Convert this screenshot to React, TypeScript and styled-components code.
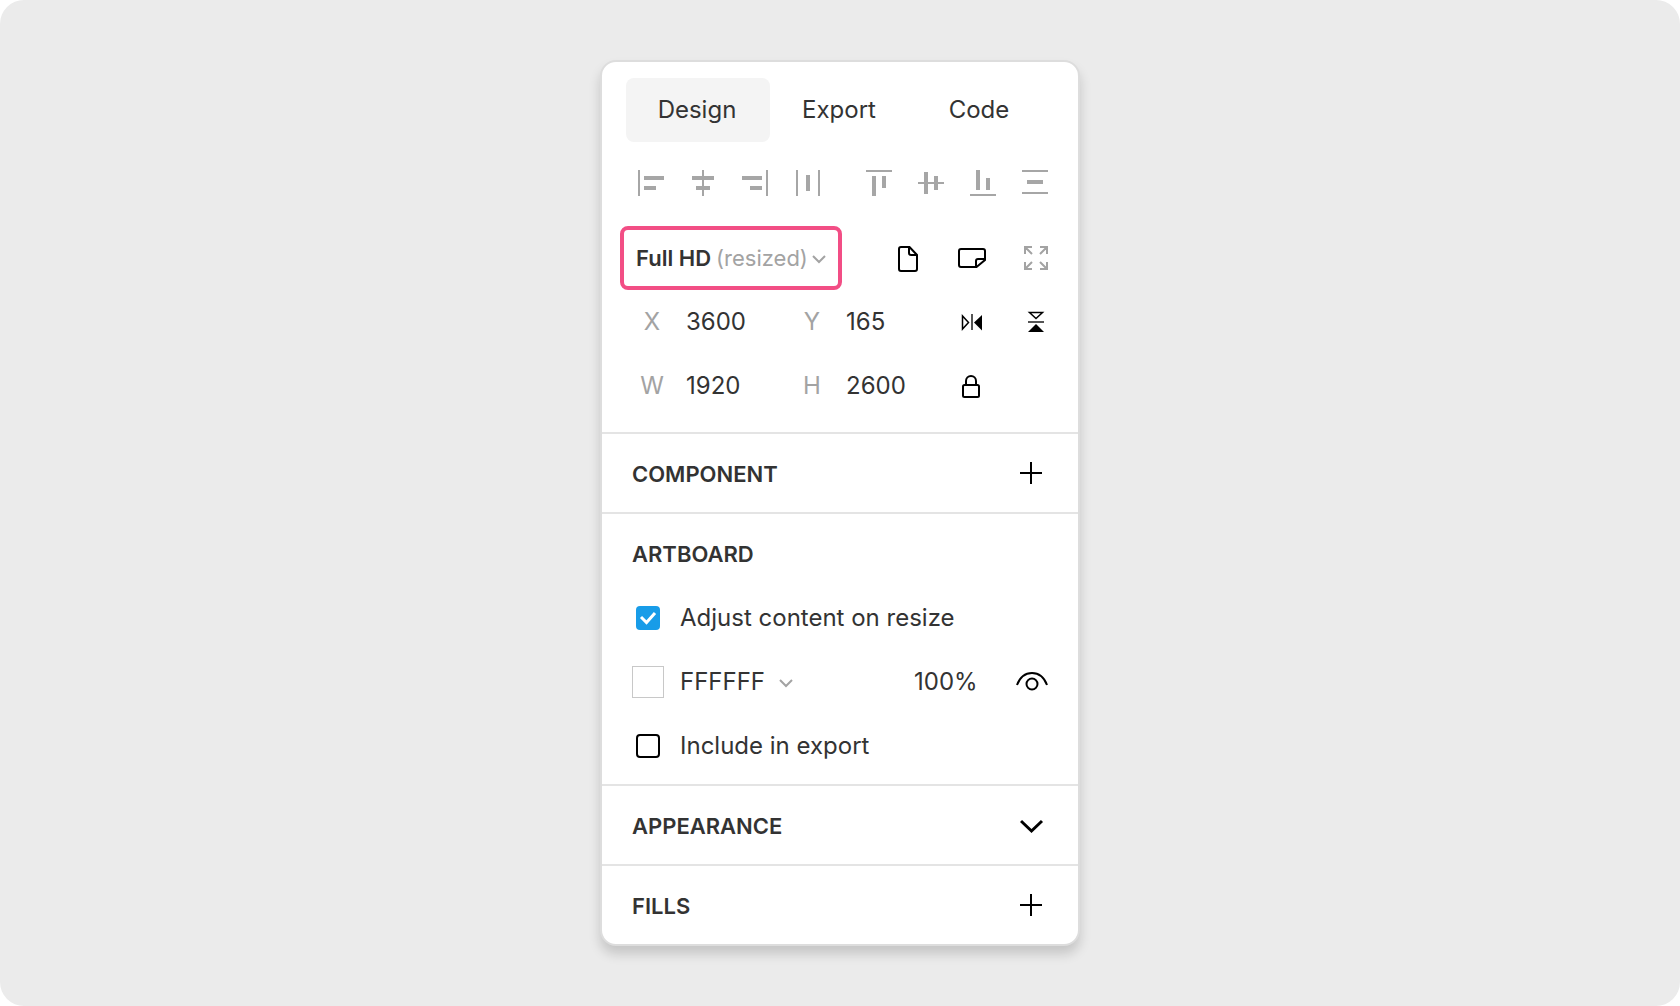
import React, { useState } from "react";
import styled, { createGlobalStyle } from "styled-components";

const ink = "#333333";
const muted = "#a3a3a3";
const line = "#e4e4e4";

const GlobalStyle = createGlobalStyle`
  *, *::before, *::after { box-sizing: border-box; }
  body { margin: 0; background: #ffffff; }
  body, button, input { font-family: Inter, "Liberation Sans", sans-serif; color: ${ink}; }
  button, input { font-size: 24px; }
`;

const Page = styled.main`
  min-height: 100vh;
  display: flex;
  align-items: center;
  justify-content: center;
  background: #ebebeb;
  border-radius: 24px;
`;

const Panel = styled.aside`
  width: 480px;
  max-width: 100%;
  background: #ffffff;
  border: 2px solid #dddddd;
  border-radius: 16px;
  box-shadow: 0 8px 12px rgba(0, 0, 0, 0.16);
`;

const Geometry = styled.section`
  padding: 16px 10px 14px 18px;
`;

const Tabs = styled.div`
  display: grid;
  grid-template-columns: 144px 1fr 1fr;
  padding: 0 18px 0 6px;
`;

const Tab = styled.button<{ $active?: boolean }>`
  height: 64px;
  padding: 0 2px 2px 0;
  border: 0;
  border-radius: 8px;
  background: ${(p) => (p.$active ? "#f4f4f4" : "transparent")};
  cursor: pointer;
`;

const AlignBar = styled.div`
  display: flex;
  gap: 20px;
  height: 84px;
  padding-left: 6px;
`;

const AlignGroup = styled.div`
  display: flex;
`;

const IconButton = styled.button<{ $width?: number; $color?: string }>`
  display: flex;
  align-items: center;
  justify-content: center;
  width: ${(p) => p.$width ?? 64}px;
  height: 100%;
  padding: 0;
  border: 0;
  background: none;
  color: ${(p) => p.$color ?? "#000000"};
  cursor: pointer;
  svg { display: block; flex: none; }
`;

const PropertyRow = styled.div`
  display: flex;
  align-items: center;
  height: 64px;
`;

const Spacer = styled.div`
  flex: 1;
`;

const Preset = styled.button`
  display: flex;
  align-items: center;
  width: 222px;
  height: 64px;
  padding: 0 12px;
  border: 4px solid #f24e85;
  border-radius: 8px;
  background: none;
  font-size: 22px;
  white-space: nowrap;
  cursor: pointer;
  strong { font-weight: 600; }
  span { color: ${muted}; margin-left: 5px; }
  svg { flex: none; margin-left: 3px; }
`;

const Field = styled.label`
  display: flex;
  align-items: center;
  width: 160px;
  height: 100%;
  font-size: 24px;
`;

const FieldName = styled.span`
  width: 64px;
  padding-bottom: 2px;
  text-align: center;
  color: ${muted};
`;

const ValueInput = styled.input<{ $width: number }>`
  width: ${(p) => p.$width}px;
  height: 40px;
  padding: 0 0 2px;
  border: 0;
  background: none;
`;

const FieldInput = styled(ValueInput)`
  padding-left: 2px;
`;

const Section = styled.section`
  padding: 6px 14px 6px 30px;
  border-top: 2px solid ${line};
`;

const SectionHeader = styled.header`
  display: flex;
  align-items: center;
  justify-content: space-between;
  height: 66px;
`;

const SectionTitle = styled.h2`
  margin: 0;
  padding-top: 2px;
  font-size: 22px;
  line-height: 28px;
  font-weight: 600;
`;

const CheckRow = styled.label`
  display: flex;
  align-items: center;
  gap: 20px;
  height: 64px;
  padding-left: 4px;
  font-size: 24px;
  cursor: pointer;
`;

const CheckText = styled.span`
  padding-bottom: 2px;
`;

const CheckBox = styled.span<{ $on: boolean }>`
  display: grid;
  width: 24px;
  height: 24px;
  border: ${(p) => (p.$on ? "0" : "2px solid #000000")};
  border-radius: 4px;
  background: ${(p) => (p.$on ? "#189ce8" : "#ffffff")};
`;

const CheckInput = styled.input`
  grid-area: 1 / 1;
  width: 100%;
  height: 100%;
  margin: 0;
  appearance: none;
`;

const CheckMark = styled.svg`
  grid-area: 1 / 1;
  pointer-events: none;
`;

const Swatch = styled.button`
  width: 32px;
  height: 32px;
  margin-right: 16px;
  padding: 0;
  border: 1px solid #c8c8c8;
  background: #ffffff;
`;

const r = (x: number, y: number, width: number, height: number) => (
  <rect key={`${x}-${y}`} x={x} y={y} width={width} height={height} />
);

const horizontalAlign = [
  { name: "Align left", bars: [r(0, 0, 2, 26), r(6, 6, 20, 4), r(6, 16, 12, 4)] },
  { name: "Align center", bars: [r(12, 0, 2, 26), r(2, 6, 22, 4), r(6, 16, 14, 4)] },
  { name: "Align right", bars: [r(24, 0, 2, 26), r(0, 6, 20, 4), r(8, 16, 12, 4)] },
  { name: "Distribute horizontally", bars: [r(2, 0, 2, 26), r(24, 0, 2, 26), r(12, 5, 4, 16)] },
];

const verticalAlign = [
  { name: "Align top", bars: [r(0, 0, 26, 2), r(6, 6, 4, 20), r(16, 6, 4, 12)] },
  { name: "Align middle", bars: [r(0, 12, 26, 2), r(6, 2, 4, 22), r(16, 6, 4, 14)] },
  { name: "Align bottom", bars: [r(0, 24, 26, 2), r(6, 0, 4, 20), r(16, 8, 4, 12)] },
  { name: "Distribute vertically", bars: [r(0, 0, 26, 2), r(0, 22, 26, 2), r(5, 10, 16, 4)] },
];

const Glyph = ({ children }: { children: React.ReactNode }) => (
  <svg width="32" height="32" viewBox="0 0 32 32" fill="none" stroke="currentColor" strokeWidth="2" aria-hidden="true">
    {children}
  </svg>
);

const SmallChevron = () => (
  <svg width="16" height="16" viewBox="0 0 16 16" fill="none" stroke={muted} strokeWidth="2" aria-hidden="true">
    <path d="M2 6l6 6 6-6" />
  </svg>
);

const Plus = () => (
  <svg width="24" height="24" viewBox="0 0 24 24" aria-hidden="true">
    <path d="M0 12h22M11 1v22" stroke="currentColor" strokeWidth="2" />
  </svg>
);

const Chevron = () => (
  <svg width="24" height="24" viewBox="0 0 24 24" fill="none" aria-hidden="true">
    <path d="M1 8l10.500 10L22 8" stroke="currentColor" strokeWidth="3" />
  </svg>
);

function CoordinateField({ name, value }: { name: string; value: string }) {
  return (
    <Field>
      <FieldName>{name}</FieldName>
      <FieldInput $width={92} defaultValue={value} />
    </Field>
  );
}

function CheckOption({ label, initial }: { label: string; initial: boolean }) {
  const [on, setOn] = useState(initial);
  return (
    <CheckRow>
      <CheckBox $on={on}>
        <CheckInput type="checkbox" checked={on} onChange={() => setOn(!on)} />
        {on && (
          <CheckMark width="24" height="24" viewBox="0 0 24 24" fill="none" aria-hidden="true">
            <path d="M5 11l5.500 5.500L19 7" stroke="#ffffff" strokeWidth="3" />
          </CheckMark>
        )}
      </CheckBox>
      <CheckText>{label}</CheckText>
    </CheckRow>
  );
}

function AlignIcons({ items }: { items: typeof horizontalAlign }) {
  return (
    <AlignGroup>
      {items.map(({ name, bars }) => (
        <IconButton key={name} $width={52} $color="#a6a6a6" aria-label={name}>
          <svg width="28" height="28" viewBox="0 0 28 28" fill="currentColor" aria-hidden="true">
            {bars}
          </svg>
        </IconButton>
      ))}
    </AlignGroup>
  );
}

export default function App() {
  return (
    <>
      <GlobalStyle />
      <Page>
        <Panel>
          <Geometry>
            <Tabs role="tablist">
              <Tab role="tab" aria-selected="true" $active>Design</Tab>
              <Tab role="tab" aria-selected="false">Export</Tab>
              <Tab role="tab" aria-selected="false">Code</Tab>
            </Tabs>
            <AlignBar>
              <AlignIcons items={horizontalAlign} />
              <AlignIcons items={verticalAlign} />
            </AlignBar>
            <PropertyRow>
              <Preset aria-haspopup="listbox">
                <strong>Full HD</strong>
                <span>(resized)</span>
                <SmallChevron />
              </Preset>
              <Spacer />
              <IconButton aria-label="Portrait">
                <Glyph>
                  <path d="M9 5h8.500L25 13v14a2 2 0 0 1-2 2H9a2 2 0 0 1-2-2V7a2 2 0 0 1 2-2z" />
                  <path d="M17 5v6a2 2 0 0 0 2 2h6" />
                </Glyph>
              </IconButton>
              <IconButton aria-label="Landscape">
                <Glyph>
                  <path d="M5 7h22a2 2 0 0 1 2 2v9l-8.500 7H5a2 2 0 0 1-2-2V9a2 2 0 0 1 2-2z" />
                  <path d="M20 25v-6a2 2 0 0 1 2-2h7" />
                </Glyph>
              </IconButton>
              <IconButton $color={muted} aria-label="Fit to content">
                <Glyph>
                  <path d="M5 12V5h7M20 5h7v7M27 20v7h-7M12 27H5v-7M5 5l7 7M27 5l-7 7M27 27l-7-7M5 27l7-7" />
                </Glyph>
              </IconButton>
            </PropertyRow>
            <PropertyRow>
              <CoordinateField name="X" value="3600" />
              <CoordinateField name="Y" value="165" />
              <IconButton aria-label="Flip horizontally">
                <Glyph>
                  <path d="M6.500 10v13l6-6.500z" strokeWidth="1.500" />
                  <path d="M16 8v16" stroke="#555555" />
                  <path d="M26 9v15.500l-8-8z" fill="currentColor" stroke="none" />
                </Glyph>
              </IconButton>
              <IconButton aria-label="Flip vertically">
                <Glyph>
                  <path d="M9.500 6.500h13l-6.500 6z" strokeWidth="1.500" />
                  <path d="M8 16h16" stroke="#555555" />
                  <path d="M8 26h16l-8-8z" fill="currentColor" stroke="none" />
                </Glyph>
              </IconButton>
            </PropertyRow>
            <PropertyRow>
              <CoordinateField name="W" value="1920" />
              <CoordinateField name="H" value="2600" />
              <IconButton aria-label="Lock proportions">
                <Glyph>
                  <rect x="7" y="15" width="16" height="12" rx="1.500" />
                  <path d="M10 15v-4a5 5 0 0 1 10 0v4" />
                </Glyph>
              </IconButton>
            </PropertyRow>
          </Geometry>

          <Section>
            <SectionHeader>
              <SectionTitle>COMPONENT</SectionTitle>
              <IconButton aria-label="Add component"><Plus /></IconButton>
            </SectionHeader>
          </Section>

          <Section>
            <SectionHeader>
              <SectionTitle>ARTBOARD</SectionTitle>
            </SectionHeader>
            <CheckOption label="Adjust content on resize" initial />
            <PropertyRow>
              <Swatch aria-label="Artboard color" />
              <ValueInput $width={90} defaultValue="FFFFFF" aria-label="Hex color" />
              <IconButton $width={32} aria-label="Color options"><SmallChevron /></IconButton>
              <Spacer />
              <ValueInput $width={86} defaultValue="100%" aria-label="Opacity" />
              <IconButton aria-label="Toggle visibility">
                <Glyph>
                  <path d="M1 19C4 11 9.500 7 16 7s12 4 15 12" />
                  <circle cx="16" cy="18" r="5.500" />
                </Glyph>
              </IconButton>
            </PropertyRow>
            <CheckOption label="Include in export" initial={false} />
          </Section>

          <Section>
            <SectionHeader>
              <SectionTitle>APPEARANCE</SectionTitle>
              <IconButton aria-label="Expand appearance"><Chevron /></IconButton>
            </SectionHeader>
          </Section>

          <Section>
            <SectionHeader>
              <SectionTitle>FILLS</SectionTitle>
              <IconButton aria-label="Add fill"><Plus /></IconButton>
            </SectionHeader>
          </Section>
        </Panel>
      </Page>
    </>
  );
}
